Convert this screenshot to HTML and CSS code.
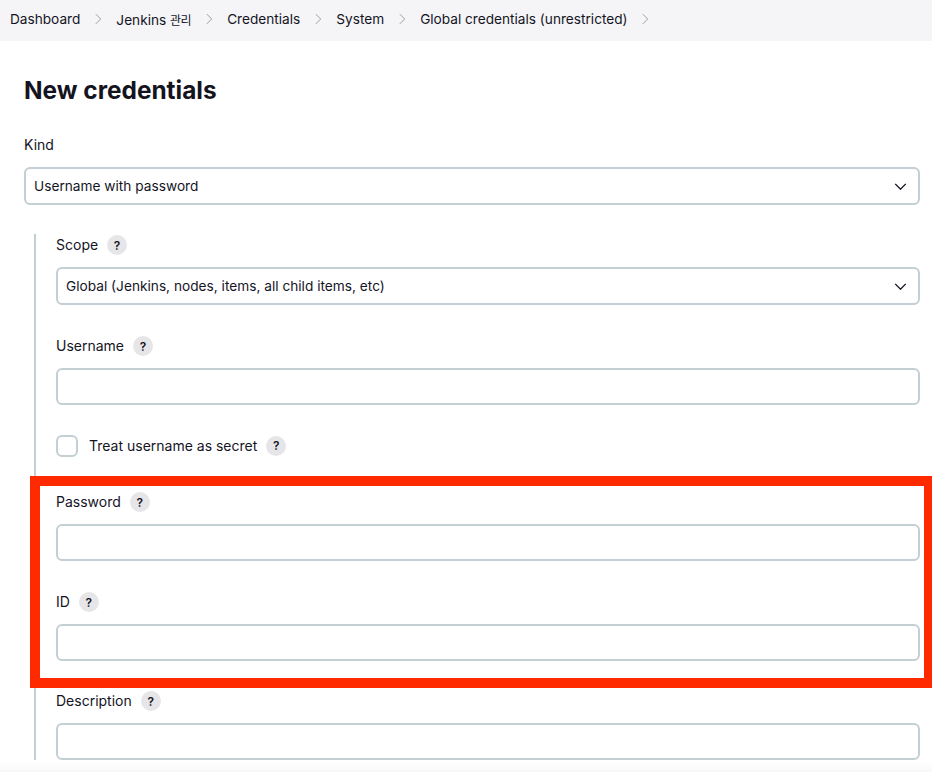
FILE: index.html
```html
<!DOCTYPE html>
<html>
<head>
    <title>New credentials</title>
    <link rel="stylesheet" href="styles.css">
</head>
<body>
    <div class="breadcrumbs">
        <a>Dashboard</a>
        <svg class="crumb-sep" viewBox="0 0 8 14"><path d="M1 1l6 6-6 6"/></svg>
        <a>Jenkins <span class="crumb-ko">관리</span></a>
        <svg class="crumb-sep" viewBox="0 0 8 14"><path d="M1 1l6 6-6 6"/></svg>
        <a>Credentials</a>
        <svg class="crumb-sep" viewBox="0 0 8 14"><path d="M1 1l6 6-6 6"/></svg>
        <a>System</a>
        <svg class="crumb-sep" viewBox="0 0 8 14"><path d="M1 1l6 6-6 6"/></svg>
        <a>Global credentials (unrestricted)</a>
        <svg class="crumb-sep" viewBox="0 0 8 14"><path d="M1 1l6 6-6 6"/></svg>
    </div>

    <div class="main">
        <h1>New credentials</h1>

        <div class="label-row kind-label"><label>Kind</label></div>
        <div class="select">
            <span>Username with password</span>
            <svg class="chevron" viewBox="0 0 14 8"><path d="M1 1l6 6 6-6"/></svg>
        </div>

        <div class="nested">
            <div class="label-row"><label>Scope</label><span class="help">?</span></div>
            <div class="select">
                <span>Global (Jenkins, nodes, items, all child items, etc)</span>
                <svg class="chevron" viewBox="0 0 14 8"><path d="M1 1l6 6 6-6"/></svg>
            </div>

            <div class="label-row field-gap"><label>Username</label><span class="help">?</span></div>
            <div class="text-input"></div>

            <div class="check-row">
                <span class="checkbox"></span>
                <label>Treat username as secret</label>
                <span class="help">?</span>
            </div>

            <div class="label-row password-label"><label>Password</label><span class="help">?</span></div>
            <div class="text-input"></div>

            <div class="label-row field-gap-id"><label>ID</label><span class="help">?</span></div>
            <div class="text-input"></div>

            <div class="label-row description-label"><label>Description</label><span class="help">?</span></div>
            <div class="text-input"></div>
        </div>
    </div>

    <div class="footer-fade"></div>
    <div class="highlight"></div>
</body>
</html>
```

FILE: styles.css
```css
html, body { height: 100%; }
body { margin: 0; height: 772px; overflow: hidden; position: relative; font-family: Inter, "Noto Sans CJK KR", sans-serif; font-size: 14px; color: #14141f; background: #fff; }

.breadcrumbs { display: flex; align-items: center; height: 41px; padding: 0 0 3px 10px; box-sizing: border-box; background: #f5f5f7; font-size: 13.65px; }
.crumb-sep { width: 6.5px; height: 12px; margin: 0 15px 0 14.5px; fill: none; stroke: #9b9ba4; stroke-width: 1.2; }
.crumb-ko { font-size: 12px; letter-spacing: -0.5px; }

.main { padding: 0 12px 0 24px; }
h1 { margin: 33px 0 0; font-size: 24.4px; line-height: 32px; font-weight: 700; }

.label-row { display: flex; align-items: center; height: 20px; }
.kind-label { margin-top: 29px; margin-bottom: 12px; }
.label-row label { margin-right: 9px; padding-bottom: 2px; }

.help { display: inline-flex; justify-content: center; align-items: center; width: 20px; height: 20px; border-radius: 50%; background: #e6e6e8; font-size: 12px; font-weight: 600; }

.select { display: flex; align-items: center; justify-content: space-between; height: 38px; box-sizing: border-box; padding: 0 11px 0 8px; border: 2px solid #c3cfd3; border-radius: 6px; font-size: 13.7px; }
.chevron { width: 13px; height: 7px; fill: none; stroke: #14141f; stroke-width: 1.6; }

.text-input { height: 37px; box-sizing: border-box; border: 2px solid #c3cfd3; border-radius: 6px; }

.nested { margin: 29px 0 0 10px; padding: 1px 0 0 20px; border-left: 2px solid #c3cfd3; height: 525px; }
.nested .label-row:first-child { margin-bottom: 12px; }
.field-gap { margin-top: 31px; margin-bottom: 12px; }
.check-row { display: flex; align-items: center; margin-top: 30px; height: 21px; }
.check-row label { margin: 0 9px 0 11px; }
.checkbox { width: 18px; height: 18px; border: 2px solid #c3cfd3; border-radius: 6px; }
.password-label { margin-top: 36px; margin-bottom: 12px; }
.field-gap-id { margin-top: 31px; margin-bottom: 12px; }
.description-label { margin-top: 30px; margin-bottom: 12px; }

.footer-fade { position: absolute; left: 0; right: 0; bottom: 0; height: 10px; background: linear-gradient(#fff, #f8f8f9); }
.highlight { position: absolute; left: 30px; top: 476px; width: 884px; height: 192px; border: 10px solid #ff2a00; }
```
